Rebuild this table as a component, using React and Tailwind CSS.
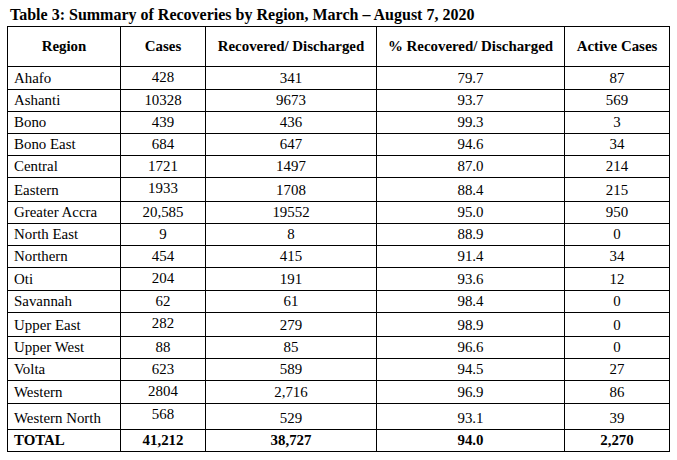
import React from "react";

const rows = [
  ["Ahafo", "428", "341", "79.7", "87", "h-[23px]"],
  ["Ashanti", "10328", "9673", "93.7", "569", "h-[22px]"],
  ["Bono", "439", "436", "99.3", "3", "h-[22px]"],
  ["Bono East", "684", "647", "94.6", "34", "h-[22px]"],
  ["Central", "1721", "1497", "87.0", "214", "h-[22px]"],
  ["Eastern", "1933", "1708", "88.4", "215", "h-[24px]"],
  ["Greater Accra", "20,585", "19552", "95.0", "950", "h-[22px]"],
  ["North East", "9", "8", "88.9", "0", "h-[22px]"],
  ["Northern", "454", "415", "91.4", "34", "h-[22px]"],
  ["Oti", "204", "191", "93.6", "12", "h-[23px]"],
  ["Savannah", "62", "61", "98.4", "0", "h-[22px]"],
  ["Upper East", "282", "279", "98.9", "0", "h-[24px]"],
  ["Upper West", "88", "85", "96.6", "0", "h-[22px]"],
  ["Volta", "623", "589", "94.5", "27", "h-[22px]"],
  ["Western", "2804", "2,716", "96.9", "86", "h-[23px]"],
  ["Western North", "568", "529", "93.1", "39", "h-[26px]"],
];

export default function App() {
  return (
    <div className="w-[677px] h-[460px] bg-white text-black [font-family:Liberation_Serif,Times_New_Roman,serif]">
      <div className="pl-[10px] pt-[5px] h-[26px] text-[16px] font-bold leading-[20px] whitespace-nowrap">
        Table 3: Summary of Recoveries by Region, March – August 7, 2020
      </div>

      <table className="ml-[7px] border-collapse table-fixed w-[662px] text-[14.9px] leading-[17px]">
        <colgroup>
          <col className="w-[113px]" />
          <col className="w-[85px]" />
          <col className="w-[171px]" />
          <col className="w-[188px]" />
          <col className="w-[105px]" />
        </colgroup>
        <thead>
          <tr className="h-[40px] font-bold">
            <th className="border border-black text-center align-middle whitespace-nowrap">Region</th>
            <th className="border border-black text-center align-middle whitespace-nowrap">Cases</th>
            <th className="border border-black text-center align-middle whitespace-nowrap">Recovered/ Discharged</th>
            <th className="border border-black text-center align-middle whitespace-nowrap">% Recovered/ Discharged</th>
            <th className="border border-black text-center align-middle whitespace-nowrap">Active Cases</th>
          </tr>
        </thead>
        <tbody>
          {rows.map(([region, cases, rec, pct, active, h]) => (
            <tr key={region} className={h}>
              <td className="border border-black pl-[6px] align-bottom pb-[2px] whitespace-nowrap">{region}</td>
              <td className="border border-black text-center align-top pt-[2px]">{cases}</td>
              <td className="border border-black text-center align-bottom pb-[2px]">{rec}</td>
              <td className="border border-black text-center align-bottom pb-[2px]">{pct}</td>
              <td className="border border-black text-center align-bottom pb-[2px]">{active}</td>
            </tr>
          ))}
          <tr className="h-[22px] font-bold">
            <td className="border border-black pl-[6px] align-bottom pb-[2px]">TOTAL</td>
            <td className="border border-black text-center align-bottom pb-[2px]">41,212</td>
            <td className="border border-black text-center align-bottom pb-[2px]">38,727</td>
            <td className="border border-black text-center align-bottom pb-[2px]">94.0</td>
            <td className="border border-black text-center align-bottom pb-[2px]">2,270</td>
          </tr>
        </tbody>
      </table>
    </div>
  );
}
